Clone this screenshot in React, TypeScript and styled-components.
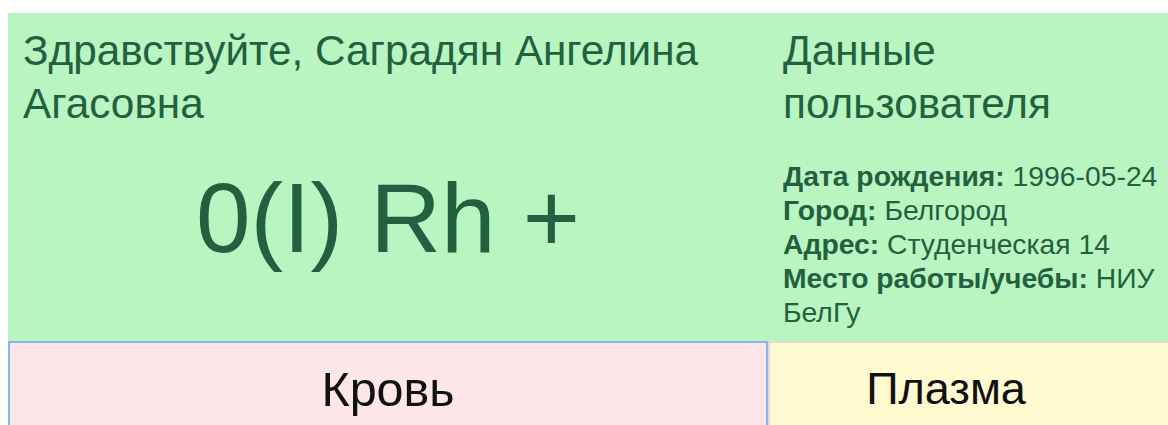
import React from "react";
import styled, { createGlobalStyle } from "styled-components";

const GlobalStyle = createGlobalStyle`
  html, body {
    margin: 0;
    padding: 0;
    background: #ffffff;
    overflow: hidden;
  }
  body {
    font-family: "Liberation Sans", Arial, sans-serif;
  }
`;

const Page = styled.div`
  width: 1190px;
  padding: 13px 0 0 8px;
`;

const InfoBand = styled.section`
  display: grid;
  grid-template-columns: 760px 420px;
  background: #b9f5c0;
  color: #22613f;
`;

const GreetingColumn = styled.div`
  padding: 0 15px 12px 15px;
`;

const ProfileColumn = styled.div`
  padding: 0 20px 12px 15px;
`;

const Heading = styled.h2`
  margin: 11px 0 0;
  font-size: 42.3px;
  line-height: 53px;
  font-weight: normal;
`;

const BloodGroup = styled.div`
  margin-top: 32px;
  text-align: center;
  font-size: 98px;
  line-height: 1.15;
`;

const Details = styled.div`
  margin-top: 29px;
  font-size: 28.3px;
  line-height: 34px;
`;

const DetailLine = styled.div``;

const Label = styled.b`
  font-weight: bold;
`;

const Tabs = styled.nav`
  display: grid;
  grid-template-columns: 760px 420px;
`;

const Tab = styled.button<{ $tone: "blood" | "plasma"; $active?: boolean }>`
  height: 110px;
  margin: 0;
  padding: ${(p) => (p.$tone === "blood" ? "18px 0 0" : "20px 64px 0 0")};
  box-sizing: border-box;
  display: flex;
  justify-content: center;
  align-items: flex-start;
  font-family: "Liberation Sans", Arial, sans-serif;
  font-size: ${(p) => (p.$tone === "blood" ? "48.5px" : "45px")};
  color: #111111;
  cursor: pointer;
  background: ${(p) => (p.$tone === "blood" ? "#fde6e8" : "#fff9cf")};
  border: 2px solid ${(p) => (p.$active ? "#8db4ec" : "#dcdcdc")};
`;

const profile = [
  { label: "Дата рождения:", value: "1996-05-24" },
  { label: "Город:", value: "Белгород" },
  { label: "Адрес:", value: "Студенческая 14" },
  { label: "Место работы/учебы:", value: "НИУ БелГу" },
];

export default function App() {
  return (
    <>
      <GlobalStyle />
      <Page>
        <InfoBand>
          <GreetingColumn>
            <Heading>Здравствуйте, Саградян Ангелина Агасовна</Heading>
            <BloodGroup>0(I) Rh +</BloodGroup>
          </GreetingColumn>
          <ProfileColumn>
            <Heading>Данные пользователя</Heading>
            <Details>
              {profile.map((item) => (
                <DetailLine key={item.label}>
                  <Label>{item.label}</Label> {item.value}
                </DetailLine>
              ))}
            </Details>
          </ProfileColumn>
        </InfoBand>
        <Tabs>
          <Tab $tone="blood" $active>
            Кровь
          </Tab>
          <Tab $tone="plasma">Плазма</Tab>
        </Tabs>
      </Page>
    </>
  );
}
